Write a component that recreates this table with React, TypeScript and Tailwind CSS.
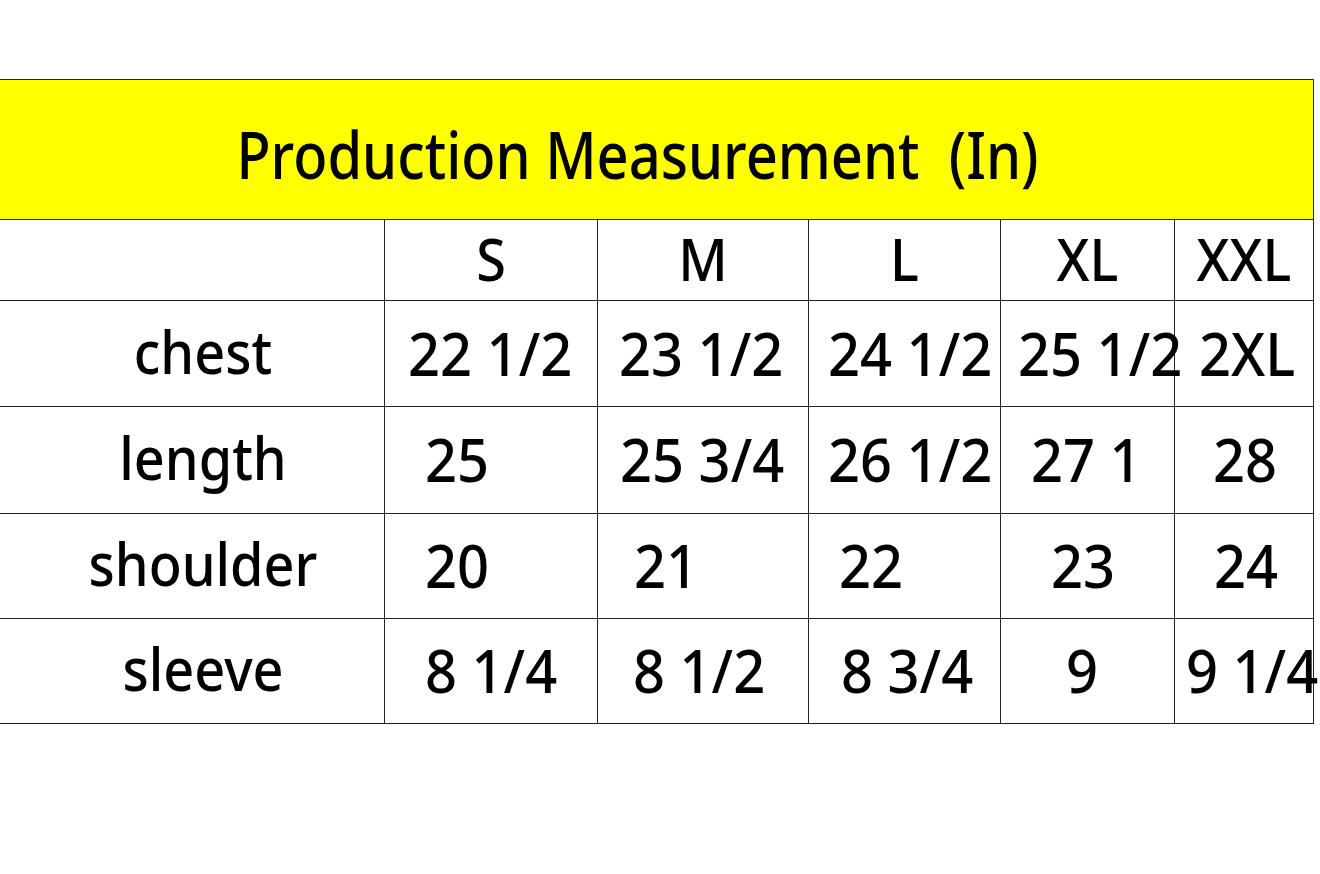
const SIZES = ["S", "M", "L", "XL", "XXL"];

// each value carries its own left inset, like the sheet it came from
const ROWS = [
  {
    label: "chest",
    cells: [
      { v: "22 1/2", pl: "pl-[23px]" },
      { v: "23 1/2", pl: "pl-[21px]" },
      { v: "24 1/2", pl: "pl-[19px]" },
      { v: "25 1/2", pl: "pl-[17px]" },
      { v: "2XL", pl: "pl-[24px]" },
    ],
  },
  {
    label: "length",
    cells: [
      { v: "25", pl: "pl-[40px]" },
      { v: "25 3/4", pl: "pl-[22px]" },
      { v: "26 1/2", pl: "pl-[19px]" },
      { v: "27 1", pl: "pl-[30px]" },
      { v: "28", pl: "pl-[38px]" },
    ],
  },
  {
    label: "shoulder",
    cells: [
      { v: "20", pl: "pl-[40px]" },
      { v: "21", pl: "pl-[36px]" },
      { v: "22", pl: "pl-[30px]" },
      { v: "23", pl: "pl-[50px]" },
      { v: "24", pl: "pl-[39px]" },
    ],
  },
  {
    label: "sleeve",
    cells: [
      { v: "8 1/4", pl: "pl-[40px]" },
      { v: "8 1/2", pl: "pl-[35px]" },
      { v: "8 3/4", pl: "pl-[32px]" },
      { v: "9", pl: "pl-[65px]" },
      { v: "9 1/4", pl: "pl-[11px]" },
    ],
  },
];

const ROW_H = ["h-[106px]", "h-[107px]", "h-[105px]", "h-[105px]"];

export default function App() {
  return (
    <div className="w-[1320px] h-[874px] bg-white overflow-hidden font-['Noto_Sans',sans-serif] font-medium text-black">
      <div className="pt-[79px] w-[1314px]">
        {/* title band */}
        <div className="h-[141px] bg-[#ffff00] border-t border-b border-r border-[#222] flex items-center justify-center">
          <span className="inline-block text-[56px] leading-none whitespace-pre scale-y-[1.16] pr-[38px] pt-[6px]">
            Production Measurement  (In)
          </span>
        </div>

        {/* size header */}
        <div className="grid grid-cols-[385px_213px_211px_192px_174px_139px] h-[81px]">
          <div className="border-r border-b border-[#222]" />
          {SIZES.map((s) => (
            <div
              key={s}
              className="flex items-center justify-center border-r border-b border-[#222]"
            >
              <span className="inline-block text-[54px] leading-none scale-y-[1.08] pb-[4px]">
                {s}
              </span>
            </div>
          ))}
        </div>

        {ROWS.map((r, ri) => (
          <div
            key={r.label}
            className={`grid grid-cols-[385px_213px_211px_192px_174px_139px] ${ROW_H[ri]}`}
          >
            <div className="flex items-center justify-center pl-[22px] border-r border-b border-[#222]">
              <span className="inline-block text-[54px] leading-none scale-y-[1.12] pb-[6px]">
                {r.label}
              </span>
            </div>
            {r.cells.map((c, ci) => (
              <div
                key={ci}
                className={`flex items-center whitespace-nowrap overflow-visible border-r border-b border-[#222] ${c.pl}`}
              >
                <span className="inline-block text-[56px] leading-none scale-y-[1.08] pb-[4px]">
                  {c.v}
                </span>
              </div>
            ))}
          </div>
        ))}
      </div>
    </div>
  );
}
